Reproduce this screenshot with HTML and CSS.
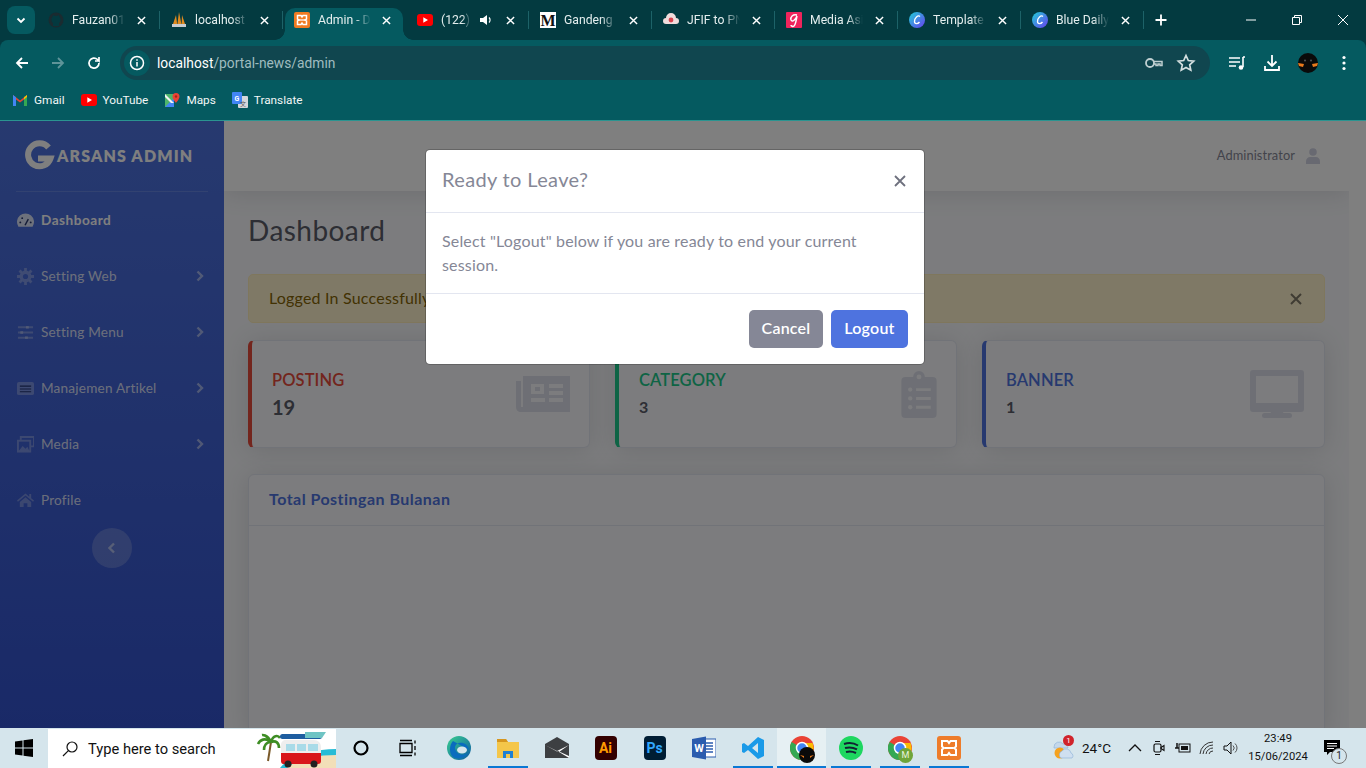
FILE: index.html
```html
<!DOCTYPE html>
<html lang="en">
<head>
<meta charset="utf-8">
<title>Admin - Dashboard</title>
<link rel="stylesheet" href="styles.css">
</head>
<body>
<svg class="defs" width="0" height="0" aria-hidden="true">
  <defs>
    <linearGradient id="canva" x1="0" y1="0" x2="1" y2="1"><stop offset="0" stop-color="#1fd0d6"/><stop offset="1" stop-color="#6a3df0"/></linearGradient>
    <linearGradient id="edge" x1="0" y1="0" x2="1" y2="1"><stop offset="0" stop-color="#3bd08f"/><stop offset="1" stop-color="#0c59a4"/></linearGradient>
  </defs>
</svg>

<header class="chrome">
  <div class="tabstrip">
    <button class="tab-search"><svg width="12" height="12" viewBox="0 0 12 12"><path d="M2.5 4.5 6 8l3.5-3.5" fill="none" stroke="#fff" stroke-width="1.8"/></svg></button>
    <div class="tab">
      <svg class="fav" viewBox="0 0 16 16"><circle cx="8" cy="8" r="7.5" fill="#1a2b30"/><path d="M5 14V11C3 10 3 6 4.5 5L5 3l2 1h2l2-1 .5 2C13 6 13 10 11 11v3" fill="#03393f"/></svg>
      <span class="tab-title">Fauzan010</span>
      <svg class="x" viewBox="0 0 10 10"><path d="M1 1l8 8M9 1 1 9"/></svg>
    </div>
    <div class="tab">
      <svg class="fav" viewBox="0 0 16 16"><path d="M1 15 5 3l1.500 12zM6 15 8 0l3 15zM10.500 15 11 3l4 12z" fill="#e08a1e"/><rect x="1" y="12" width="14" height="3" fill="#c9ccd0"/></svg>
      <span class="tab-title">localhost /</span>
      <svg class="x" viewBox="0 0 10 10"><path d="M1 1l8 8M9 1 1 9"/></svg>
    </div>
    <div class="tab tab-active">
      <svg class="fav" viewBox="0 0 16 16"><rect width="16" height="16" rx="2" fill="#f07b22"/><path d="M3.500 3.500h3.500l1 1.500 1-1.500h3.500v3.500l-1.500 1 1.500 1v3.500H9l-1-1.500-1 1.500H3.500V9L5 8 3.500 7z" fill="none" stroke="#fff" stroke-width="1.500"/><path d="M5 8h6" stroke="#fff" stroke-width="1.300"/></svg>
      <span class="tab-title">Admin - D</span>
      <svg class="x" viewBox="0 0 10 10"><path d="M1 1l8 8M9 1 1 9"/></svg>
    </div>
    <div class="tab">
      <svg class="fav" viewBox="0 0 16 16"><rect y="2" width="16" height="12" rx="3" fill="#f00"/><path d="M6.3 5.3v5.4L11 8z" fill="#fff"/></svg>
      <span class="tab-title tab-title-short">(122) T</span>
      <svg class="speaker" viewBox="0 0 14 14"><path d="M1 5h3l4-3v10L4 9H1z" fill="#fff"/><path d="M10 4.5a3.5 3.5 0 0 1 0 5" fill="none" stroke="#fff" stroke-width="1.2"/></svg>
      <svg class="x" viewBox="0 0 10 10"><path d="M1 1l8 8M9 1 1 9"/></svg>
    </div>
    <div class="tab">
      <svg class="fav" viewBox="0 0 16 16"><rect width="16" height="16" fill="#fff"/><text x="8" y="14" class="fav-m">M</text></svg>
      <span class="tab-title">Gandeng</span>
      <svg class="x" viewBox="0 0 10 10"><path d="M1 1l8 8M9 1 1 9"/></svg>
    </div>
    <div class="tab">
      <svg class="fav" viewBox="0 0 16 16"><path d="M3 12a3 3 0 0 1 0-6 5 5 0 0 1 10 0 3 3 0 0 1 0 6z" fill="#f1dcdc"/><circle cx="8" cy="8" r="2.4" fill="#d8434e"/></svg>
      <span class="tab-title">JFIF to PNG</span>
      <svg class="x" viewBox="0 0 10 10"><path d="M1 1l8 8M9 1 1 9"/></svg>
    </div>
    <div class="tab">
      <svg class="fav" viewBox="0 0 16 16"><rect width="16" height="16" rx="1" fill="#f0245c"/><path d="M11 3C7 2 4 5 5 8c1 2 4 1 6-4-1 4-1 8-3 10-1 1-3 0-3-1" fill="none" stroke="#fff" stroke-width="1.5"/></svg>
      <span class="tab-title">Media Asi</span>
      <svg class="x" viewBox="0 0 10 10"><path d="M1 1l8 8M9 1 1 9"/></svg>
    </div>
    <div class="tab">
      <svg class="fav" viewBox="0 0 16 16"><circle cx="8" cy="8" r="8" fill="url(#canva)"/><path d="M11 4.5C9 2.500 5.500 6 5.500 9.500c0 3 3.500 2.500 5 .5" fill="none" stroke="#fff" stroke-width="1.300"/></svg>
      <span class="tab-title">Template</span>
      <svg class="x" viewBox="0 0 10 10"><path d="M1 1l8 8M9 1 1 9"/></svg>
    </div>
    <div class="tab">
      <svg class="fav" viewBox="0 0 16 16"><circle cx="8" cy="8" r="8" fill="url(#canva)"/><path d="M11 4.500C9 2.500 5.500 6 5.500 9.500c0 3 3.500 2.500 5 .5" fill="none" stroke="#fff" stroke-width="1.300"/></svg>
      <span class="tab-title">Blue Daily</span>
      <svg class="x" viewBox="0 0 10 10"><path d="M1 1l8 8M9 1 1 9"/></svg>
    </div>
    <svg class="plus" viewBox="0 0 12 12"><path d="M6 .5v11M.5 6h11" stroke="#fff" stroke-width="1.800"/></svg>
    <div class="win-controls">
      <svg viewBox="0 0 10 10"><path d="M0 5h10" stroke="#fff"/></svg>
      <svg viewBox="0 0 10 10"><path d="M.5 2.500h7v7h-7zM2.500 2.500v-2h7v7h-2" fill="none" stroke="#fff"/></svg>
      <svg viewBox="0 0 10 10"><path d="M0 0l10 10M10 0 0 10" stroke="#fff"/></svg>
    </div>
  </div>

  <div class="toolbar">
    <svg class="nav-ic" viewBox="0 0 16 16"><path d="M14 8H3M8 3 3 8l5 5" fill="none" stroke="#fff" stroke-width="1.800"/></svg>
    <svg class="nav-ic nav-dim" viewBox="0 0 16 16"><path d="M2 8h11M8 3l5 5-5 5" fill="none" stroke="#5f9499" stroke-width="1.800"/></svg>
    <svg class="nav-ic" viewBox="0 0 16 16"><path d="M13 8a5 5 0 1 1-1.500-3.500L13 6V2M13 6H9" fill="none" stroke="#fff" stroke-width="1.700"/></svg>
    <div class="omnibox">
      <span class="site-info"><svg width="16" height="16" viewBox="0 0 16 16"><circle cx="8" cy="8" r="6.500" fill="none" stroke="#fff" stroke-width="1.500"/><path d="M8 7v4.500M8 4.300v1.500" stroke="#fff" stroke-width="1.500"/></svg></span>
      <span class="url"><b>localhost</b>/portal-news/admin</span>
      <svg class="omni-ic" viewBox="0 0 20 20"><circle cx="6" cy="10" r="4" fill="none" stroke="#bfcfd1" stroke-width="1.800"/><path d="M10 8.500h8v4h-2V11h-2v1.500h-2V11h-2" fill="none" stroke="#bfcfd1" stroke-width="1.500"/></svg>
      <svg class="omni-ic" viewBox="0 0 20 20"><path d="M10 2.500l2.300 5 5.400.6-4 3.700 1.100 5.400L10 14.500l-4.800 2.700 1.100-5.400-4-3.700 5.400-.6z" fill="none" stroke="#d4dfe0" stroke-width="1.700"/></svg>
    </div>
    <div class="tool-actions">
      <svg viewBox="0 0 18 18"><path d="M1 4h11M1 8h11M1 12h7" stroke="#fff" stroke-width="1.600"/><path d="M15 3h2M15 3v10" stroke="#fff" stroke-width="1.600" fill="none"/><circle cx="13" cy="13.500" r="2.300" fill="#fff"/></svg>
      <svg viewBox="0 0 18 18"><path d="M9 1v11M4.500 7.500 9 12l4.500-4.500M2 12v4h14v-4" fill="none" stroke="#fff" stroke-width="1.800"/></svg>
      <svg class="avatar" viewBox="0 0 20 20"><circle cx="10" cy="10" r="10" fill="#0a0a0a"/><path d="M0 10l6 1-1 3-4-1zM20 10l-6 1 1 3 4-1z" fill="#e8791c"/><circle cx="7" cy="7.500" r="1" fill="#555"/><circle cx="13" cy="7.500" r="1" fill="#555"/></svg>
      <svg viewBox="0 0 18 18"><circle cx="9" cy="3.500" r="1.600" fill="#fff"/><circle cx="9" cy="9" r="1.600" fill="#fff"/><circle cx="9" cy="14.500" r="1.600" fill="#fff"/></svg>
    </div>
  </div>

  <nav class="bookmarks">
    <a class="bm"><svg viewBox="0 0 16 16"><path d="M1 14V3l7 5.500L15 3v11h-3V7.500L8 10.500 4 7.500V14z" fill="#ea4335"/><path d="M1 14V3l3 2.300V14z" fill="#4285f4"/><path d="M15 14V3l-3 2.300V14z" fill="#34a853"/><path d="M12 5.300 15 3v2l-3 2.500z" fill="#fbbc04"/></svg>Gmail</a>
    <a class="bm"><svg viewBox="0 0 16 16"><rect y="2" width="16" height="12" rx="3" fill="#f00"/><path d="M6.300 5.300v5.400L11 8z" fill="#fff"/></svg>YouTube</a>
    <a class="bm"><svg viewBox="0 0 16 16"><path d="M1 2h9v13H1z" fill="#4fb56a"/><path d="M1 15 10 6v9z" fill="#4285f4"/><path d="M1 2l9 9H7L1 5z" fill="#f4f4f4"/><path d="M12 1a3.500 3.500 0 0 0-3.500 3.500C8.500 7 12 11 12 11s3.500-4 3.500-6.500A3.500 3.500 0 0 0 12 1z" fill="#ea4335"/><circle cx="12" cy="4.500" r="1.200" fill="#a52714"/></svg>Maps</a>
    <a class="bm"><svg viewBox="0 0 16 16"><rect x="6" y="4" width="10" height="12" rx="1" fill="#d5d7db"/><rect width="10" height="12" rx="1" fill="#4285f4"/><text x="5" y="9" class="bm-g">G</text><text x="11" y="14" class="bm-t">文</text></svg>Translate</a>
  </nav>
</header>

<div class="app">
  <aside class="sidebar">
    <div class="brand">
      <svg class="brand-g" viewBox="0 0 30 30"><path d="M23.500 7.500A11.500 11.500 0 1 0 25.500 18.500H13" fill="none" stroke="#fff" stroke-width="6"/></svg>
      <span class="brand-text">ARSANS ADMIN</span>
    </div>
    <div class="side-divider"></div>
    <a class="side-item side-active">
      <svg class="side-ic" viewBox="0 0 18 18"><path d="M1.500 15.500a9 9 0 1 1 15 0z" fill="currentColor"/><path d="M8.500 14 12 7.500" stroke="#27376f" stroke-width="1.500"/><circle cx="3.500" cy="11" r="1" fill="#27376f"/><circle cx="5.500" cy="6.500" r="1" fill="#27376f"/><circle cx="14.500" cy="11" r="1" fill="#27376f"/></svg>
      <span>Dashboard</span>
    </a>
    <a class="side-item">
      <svg class="side-ic" viewBox="0 0 18 18"><circle cx="9" cy="9" r="4.500" fill="none" stroke="currentColor" stroke-width="3.500"/><path d="M9 0v3M9 15v3M0 9h3M15 9h3M2.700 2.700l2 2M13.300 13.300l2 2M15.300 2.700l-2 2M4.700 13.300l-2 2" stroke="currentColor" stroke-width="3"/></svg>
      <span>Setting Web</span>
      <svg class="chev" viewBox="0 0 8 12"><path d="M1.500 1.500 6 6l-4.500 4.500" fill="none" stroke="currentColor" stroke-width="2.400"/></svg>
    </a>
    <a class="side-item">
      <svg class="side-ic" viewBox="0 0 18 18"><path d="M1 3.500h16M1 9h16M1 14.500h16" stroke="currentColor" stroke-width="2"/><path d="M11 2v3M5 7.500v3M10 13v3" stroke="currentColor" stroke-width="3"/></svg>
      <span>Setting Menu</span>
      <svg class="chev" viewBox="0 0 8 12"><path d="M1.500 1.500 6 6l-4.500 4.500" fill="none" stroke="currentColor" stroke-width="2.400"/></svg>
    </a>
    <a class="side-item">
      <svg class="side-ic" viewBox="0 0 18 18"><rect y="2" width="18" height="14" rx="2" fill="currentColor"/><path d="M3 6.500h12M3 9.500h12M3 12.500h12" stroke="#223572" stroke-width="1.200"/></svg>
      <span>Manajemen Artikel</span>
      <svg class="chev" viewBox="0 0 8 12"><path d="M1.500 1.500 6 6l-4.500 4.500" fill="none" stroke="currentColor" stroke-width="2.400"/></svg>
    </a>
    <a class="side-item">
      <svg class="side-ic" viewBox="0 0 18 18"><path d="M4 4V1h14v10h-3" fill="none" stroke="currentColor" stroke-width="2"/><rect x="1" y="5" width="13" height="11.500" fill="none" stroke="currentColor" stroke-width="2"/><path d="M2 15.500l4-5 3 3 2-2 2 4z" fill="currentColor"/></svg>
      <span>Media</span>
      <svg class="chev" viewBox="0 0 8 12"><path d="M1.500 1.500 6 6l-4.500 4.500" fill="none" stroke="currentColor" stroke-width="2.400"/></svg>
    </a>
    <a class="side-item">
      <svg class="side-ic" viewBox="0 0 18 18"><path d="M9 1.500 0 9l1 1.200L9 3.700l8 6.500L18 9l-3-2.500V2h-2v3zM3 10.500V16h4v-4h4v4h4v-5.500L9 5.500z" fill="currentColor"/></svg>
      <span>Profile</span>
    </a>
    <button class="side-toggle"><svg width="8" height="12" viewBox="0 0 8 12"><path d="M6 1.500 1.500 6 6 10.500" fill="none" stroke="currentColor" stroke-width="2.400"/></svg></button>
  </aside>

  <div class="main-wrap">
    <main class="main">
      <div class="topbar">
        <span class="user-name">Administrator</span>
        <svg class="user-ic" viewBox="0 0 14 16"><circle cx="7" cy="4" r="3.800" fill="#d1d3e2"/><path d="M0 16v-2.500C0 10.500 2 9 4 9h6c2 0 4 1.500 4 4.500V16z" fill="#d1d3e2"/></svg>
      </div>
      <div class="content">
        <h1 class="page-title">Dashboard</h1>
        <div class="alert">
          <span>Logged In Successfully</span>
          <svg class="alert-x" viewBox="0 0 12 12"><path d="M1 1l10 10M11 1 1 11" stroke="#000" stroke-opacity=".5" stroke-width="2"/></svg>
        </div>
        <div class="stat-row">
          <div class="stat stat-red">
            <div class="stat-body"><div class="stat-label">POSTING</div><div class="stat-value">19</div></div>
            <svg class="stat-ic stat-ic-news" viewBox="0 0 54 36"><path d="M7 0h47v36H5C2 36 0 34 0 31V5h5v26h2z" fill="#dddfeb"/><path d="M15 8v10h13V8zM19 11h5v4h-5z" fill="#f8f9fc" fill-rule="evenodd"/><path d="M33 8h14v4H33zM33 15h14v4H33zM15 22h14v4H15zM33 22h14v4H33z" fill="#f8f9fc"/></svg>
          </div>
          <div class="stat stat-green">
            <div class="stat-body"><div class="stat-label">CATEGORY</div><div class="stat-value stat-value-sm">3</div></div>
            <svg class="stat-ic stat-ic-clip" viewBox="0 0 36 48"><path d="M4 6h8a6 6 0 0 1 12 0h8a4 4 0 0 1 4 4v34a4 4 0 0 1-4 4H4a4 4 0 0 1-4-4V10a4 4 0 0 1 4-4z" fill="#dddfeb"/><circle cx="18" cy="6" r="2.500" fill="#f8f9fc"/><circle cx="9" cy="19" r="2.200" fill="#f8f9fc"/><circle cx="9" cy="28" r="2.200" fill="#f8f9fc"/><circle cx="9" cy="37" r="2.200" fill="#f8f9fc"/><path d="M15 17.500h15v3H15zM15 26.500h15v3H15zM15 35.500h15v3H15z" fill="#f8f9fc"/></svg>
          </div>
          <div class="stat stat-blue">
            <div class="stat-body"><div class="stat-label">BANNER</div><div class="stat-value stat-value-sm">1</div></div>
            <svg class="stat-ic stat-ic-desk" viewBox="0 0 54 48"><path d="M3 0h48a3 3 0 0 1 3 3v36H0V3a3 3 0 0 1 3-3zM6 6v27h42V6z" fill="#dddfeb" fill-rule="evenodd"/><path d="M0 36h54v3a3 3 0 0 1-3 3H3a3 3 0 0 1-3-3zM21 42h12l1 2H20z" fill="#dddfeb"/><rect x="12" y="43" width="30" height="5" rx="2.500" fill="#dddfeb"/></svg>
          </div>
        </div>
        <section class="panel">
          <div class="panel-head">Total Postingan Bulanan</div>
        </section>
      </div>
    </main>
    <div class="scroll-gutter"></div>
  </div>

  <div class="backdrop">
    <div class="modal">
      <div class="modal-head">
        <h2 class="modal-title">Ready to Leave?</h2>
        <svg class="modal-x" viewBox="0 0 12 12"><path d="M1 1l10 10M11 1 1 11" stroke="#6e707e" stroke-width="1.800"/></svg>
      </div>
      <div class="modal-body">Select "Logout" below if you are ready to end your current session.</div>
      <div class="modal-foot">
        <button class="btn btn-grey">Cancel</button>
        <button class="btn btn-blue">Logout</button>
      </div>
    </div>
  </div>
</div>

<footer class="taskbar">
  <div class="start"><svg width="18" height="18" viewBox="0 0 18 18"><path d="M0 2.500 7.500 1.400V8.500H0zM8.500 1.300 18 0v8.500H8.500zM0 9.500h7.500v7.100L0 15.500zM8.500 9.500H18V18L8.500 16.700z" fill="#000"/></svg></div>
  <div class="search">
    <svg class="search-ic" viewBox="0 0 16 16"><circle cx="10" cy="6" r="5" fill="none" stroke="#111" stroke-width="1.200"/><path d="M6.400 9.600 1 15" stroke="#111" stroke-width="1.200"/></svg>
    <span>Type here to search</span>
    <svg class="search-art" viewBox="0 0 81 39">
      <path d="M30 39C40 28 60 24 81 24v15z" fill="#f2dfb8"/><path d="M25 39C35 26 60 20 81 20v6C60 26 42 30 32 39z" fill="#27bcd6"/>
      <path d="M13 32 16 13" stroke="#7a5a2a" stroke-width="2"/>
      <path d="M16 13C10 8 5 11 3 15M16 13C12 5 7 6 7 6M16 13C18 6 23 6 25 9M16 13C21 11 24 14 24 19M16 13C11 13 9 17 9 21" fill="none" stroke="#3e8d24" stroke-width="2.600"/>
      <rect x="25" y="5" width="42" height="5" rx="2.500" fill="#1e5da0"/><path d="M50 3h21l-4 6H50z" fill="#6fc4c4"/>
      <path d="M26 16c0-3 2-5 5-5h28c4 0 7 3 7 7v8H26z" fill="#eee"/>
      <path d="M26 24h40v8c0 2-1 3-3 3H28c-1 0-2-1-2-3z" fill="#d9161b"/>
      <rect x="31" y="15" width="9" height="7" fill="#a9dbe8"/><rect x="42" y="15" width="9" height="7" fill="#a9dbe8"/><rect x="53" y="15" width="10" height="7" fill="#a9dbe8"/>
      <circle cx="33" cy="35" r="3.500" fill="#222"/><circle cx="59" cy="35" r="3.500" fill="#222"/>
    </svg>
  </div>
  <div class="task-icons">
    <div class="task"><svg viewBox="0 0 20 20"><circle cx="10" cy="10" r="6.500" fill="none" stroke="#000" stroke-width="2.200"/></svg></div>
    <div class="task task-nudge"><svg viewBox="0 0 20 20"><path d="M2 5.500h12v9H2z" fill="none" stroke="#000" stroke-width="1.300"/><path d="M2 2.500h12M2 17.500h12M17 2.500v3M17 8v4M17 14.500v3" stroke="#000" stroke-width="1.300"/></svg></div>
    <div class="task"><svg class="big" viewBox="0 0 24 24"><circle cx="12" cy="12" r="12" fill="url(#edge)"/><path d="M22 14c-1-6-6-8-10-7-4 1-5 5-3 8 2 4 7 5 12 2-3 5-10 7-15 4C2 18 2 9 6 5" fill="#0a6cbe"/><ellipse cx="15" cy="14" rx="5" ry="3.500" fill="#d5e5ec"/></svg></div>
    <div class="task task-on"><svg class="big" viewBox="0 0 24 24"><path d="M1 3h9l2 3h11v16H1z" fill="#f4c64a"/><path d="M1 3h9l2 3H1z" fill="#d6961f"/><rect x="7" y="15" width="10" height="7" fill="#1f80d2"/><rect x="10" y="18" width="4" height="4" fill="#f4c64a"/></svg></div>
    <div class="task"><svg class="big" viewBox="0 0 24 24"><path d="M0 8 12 1l12 7v14H0z" fill="#3d3f42"/><path d="M0 9l12 6 12-6-10 7 10 6v-2L13 15l-1 .5L0 9z" fill="#fff"/></svg></div>
    <div class="task"><div class="app-tile tile-ai">Ai</div></div>
    <div class="task"><div class="app-tile tile-ps">Ps</div></div>
    <div class="task"><svg class="big" viewBox="0 0 24 24"><rect x="9" y="3" width="15" height="18" fill="#fff" stroke="#2b5cae"/><path d="M13 7h8M13 10h8M13 13h8M13 16h8" stroke="#2b5cae" stroke-width="1.500"/><path d="M0 3l14-2.500v23L0 21z" fill="#2b5cae"/><text x="7" y="16" class="word-w">W</text></svg></div>
    <div class="task task-on"><svg class="big" viewBox="0 0 24 24"><path d="M17 1l6 3v16l-6 3-10-9-4 3-2-1V8l2-1 4 3zM17 7l-6 5 6 5z" fill="#1a9ae8" fill-rule="evenodd"/></svg></div>
    <div class="task task-on task-active"><svg class="big" viewBox="0 0 24 24"><circle cx="12" cy="12" r="12" fill="#ea4335"/><path d="M12 12 1.600 6A12 12 0 0 0 12 24l6-10z" fill="#34a853"/><path d="M12 7h10.500A12 12 0 0 1 12 24l6-10z" fill="#fbbc04"/><circle cx="12" cy="12" r="5.500" fill="#4285f4" stroke="#fff" stroke-width="1.500"/></svg><svg class="task-badge" viewBox="0 0 16 16"><circle cx="8" cy="8" r="8" fill="#0a0a0a"/><path d="M1 8l4 1v2zM15 8l-4 1v2z" fill="#e8791c"/></svg></div>
    <div class="task task-on"><svg class="big" viewBox="0 0 24 24"><circle cx="12" cy="12" r="12" fill="#1ed760"/><path d="M5 8c5-1.500 10-1 14 1.500M6 12c4-1 8-.7 12 1.300M7 16c3-.8 7-.5 10 1" fill="none" stroke="#123" stroke-width="2"/></svg></div>
    <div class="task task-on"><svg class="big" viewBox="0 0 24 24"><circle cx="12" cy="12" r="12" fill="#ea4335"/><path d="M12 12 1.600 6A12 12 0 0 0 12 24l6-10z" fill="#34a853"/><path d="M12 7h10.500A12 12 0 0 1 12 24l6-10z" fill="#fbbc04"/><circle cx="12" cy="12" r="5.500" fill="#4285f4" stroke="#fff" stroke-width="1.500"/></svg><span class="task-m">M</span></div>
    <div class="task task-on"><svg class="big" viewBox="0 0 24 24"><rect width="24" height="24" rx="3" fill="#ee7c2a"/><path d="M5 5h5.500L12 7l1.500-2H19v5.500L17 12l2 1.500V19h-5.500L12 17l-1.500 2H5v-5.500L7 12l-2-1.500z" fill="none" stroke="#fff" stroke-width="2"/><path d="M7.500 12h9" stroke="#fff" stroke-width="2"/></svg></div>
  </div>
  <div class="tray">
    <svg class="tray-weather" viewBox="0 0 24 24"><path d="M3 11a5 5 0 0 1 9-3 4 4 0 0 1 5 4H3z" fill="#c5d8ea" stroke="#8ab0d6" stroke-width=".6"/><circle cx="9" cy="17" r="5.500" fill="#f5a21f"/><path d="M10 22a4 4 0 0 1 1-7 5 5 0 0 1 9 2 3 3 0 0 1 1 5z" fill="#cfdff0" stroke="#8ab0d6" stroke-width=".6"/></svg>
    <span class="tray-badge">1</span>
    <span class="tray-temp">24°C</span>
    <svg class="tray-ic tray-first" viewBox="0 0 16 16"><path d="M2 11l6-6 6 6" fill="none" stroke="#111" stroke-width="1.300"/></svg>
    <svg class="tray-ic" viewBox="0 0 16 16"><rect x="3" y="4" width="7" height="8" rx="1.500" fill="none" stroke="#111" stroke-width="1.200"/><path d="M10 7.500l3-2v5l-3-2zM4 1.500h5M4 14.500h5" fill="none" stroke="#111" stroke-width="1.100"/></svg>
    <svg class="tray-ic" viewBox="0 0 16 16"><rect x="4" y="4" width="11" height="8" fill="none" stroke="#111"/><rect x="6" y="6" width="7" height="4" fill="#111"/><path d="M0 8h4M2 3v5" stroke="#111" stroke-width="1.500"/></svg>
    <svg class="tray-ic" viewBox="0 0 16 16"><path d="M1 14a13 13 0 0 1 13-12M4 14a10 10 0 0 1 10-9M7 14a7 7 0 0 1 7-6M10 14a4 4 0 0 1 4-3" fill="none" stroke="#333" stroke-width="1"/></svg>
    <svg class="tray-ic" viewBox="0 0 16 16"><path d="M1 6h3l4-4v12l-4-4H1z" fill="none" stroke="#111"/><path d="M10 5.500a3.500 3.500 0 0 1 0 5M12 3.500a6 6 0 0 1 0 9" fill="none" stroke="#444" stroke-width=".9"/></svg>
    <div class="clock"><span>23:49</span><span>15/06/2024</span></div>
    <div class="notif">
      <svg width="16" height="16" viewBox="0 0 16 16"><path d="M0 0h16v12H6l-3 3v-3H0z" fill="#000"/><path d="M3 3.500h10M3 6h10M3 8.500h7" stroke="#fff"/></svg>
      <span class="notif-count">1</span>
    </div>
  </div>
</footer>
</body>
</html>
```

FILE: styles.css
```css
* { box-sizing: border-box; }
html, body { margin: 0; height: 100%; overflow: hidden; }
body {
  width: 1366px; height: 768px; display: flex; flex-direction: column;
  font-family: "Lato", "Noto Sans", sans-serif; background: #fff;
}
.defs { position: absolute; }
button { border: 0; font-family: inherit; padding: 0; }

/* browser chrome */
.chrome { flex: 0 0 121px; background: #033a40; color: #fff; font-family: "Roboto", "Noto Sans", sans-serif; border-bottom: 1px solid #2a9490; }
.tabstrip { height: 40px; display: flex; align-items: flex-start; padding-left: 7px; }
.tab-search { width: 28px; height: 28px; margin: 6px 2px 0 0; border-radius: 8px; background: #055a60; display: flex; align-items: center; justify-content: center; }
.tab { width: 123px; height: 32px; margin-top: 8px; display: flex; align-items: center; padding: 0 11px 8px; position: relative; font-size: 12.2px; color: #e4eeee; }
.tab::after { content: ""; position: absolute; right: 0; top: 3px; height: 18px; width: 1px; background: #1d6268; }
.tab-active { background: #055a60; border-radius: 10px 10px 0 0; margin-left: 2px; margin-right: 3px; width: 118px; padding: 0 9px 8px; }
.tab-active::before, .tab-active::after { content: ""; position: absolute; top: auto; bottom: 0; width: 10px; height: 10px; background: radial-gradient(circle at 0 0, transparent 9.500px, #055a60 10px); }
.tab-active::before { left: -10px; right: auto; }
.tab-active::after { right: -10px; background: radial-gradient(circle at 100% 0, transparent 9.500px, #055a60 10px); }
.fav { width: 16px; height: 16px; flex: none; }
.fav-m { font: 700 16px "Liberation Serif", serif; fill: #111; text-anchor: middle; }
.tab-title { width: 53px; margin-left: 8px; overflow: hidden; white-space: nowrap; -webkit-mask-image: linear-gradient(90deg, #000 70%, transparent 100%); mask-image: linear-gradient(90deg, #000 70%, transparent 100%); }
.tab-title-short { width: 30px; }
.speaker { width: 14px; height: 14px; margin-left: 8px; flex: none; }
.x { width: 9px; height: 9px; margin-left: auto; margin-right: 3px; flex: none; fill: none; stroke: #fff; stroke-width: 1.6; }
.plus { width: 12px; height: 12px; margin: 14px 0 0 11px; flex: none; }
.win-controls { margin-left: auto; display: flex; gap: 36px; padding: 15px 18px 0 0; }
.win-controls svg { width: 10px; height: 10px; }

.toolbar { height: 44px; background: #055a60; border-radius: 8px 8px 0 0; display: flex; align-items: center; padding: 2px 0 0 14px; gap: 20px; }
.nav-ic { width: 16px; height: 16px; flex: none; }
.omnibox { width: 1090px; height: 34px; margin-left: -2px; border-radius: 17px; background: #10464f; display: flex; align-items: center; padding: 0 14px 0 4px; flex: none; }
.site-info { width: 26px; height: 26px; border-radius: 50%; background: #055a60; display: flex; align-items: center; justify-content: center; }
.url { margin-left: 7px; font-size: 13.8px; color: #9fbcbf; flex: 1; }
.url b { font-weight: 400; color: #fff; }
.omni-ic { width: 20px; height: 20px; margin-left: 12px; flex: none; }
.tool-actions { display: flex; align-items: center; margin-left: -2px; }
.tool-actions svg { width: 18px; height: 18px; margin-right: 17px; }
.tool-actions .avatar { width: 20px; height: 20px; }

.bookmarks { height: 36px; background: #055a60; display: flex; align-items: center; padding: 0 0 5px 12px; font-size: 11.8px; gap: 16px; }
.bm { display: flex; align-items: center; gap: 6px; color: #f2f6f6; }
.bm svg { width: 16px; height: 16px; flex: none; }
.bm-g { font: 700 7px "Roboto", sans-serif; fill: #fff; text-anchor: middle; }
.bm-t { font: 6px "Noto Sans CJK SC", sans-serif; fill: #555; text-anchor: middle; }

/* app */
.app { flex: 1; min-height: 0; display: flex; position: relative; overflow: hidden; background: #fff; }
.sidebar { width: 224px; flex: none; background: linear-gradient(180deg, #4e73df 0%, #3353cf 100%); display: flex; flex-direction: column; align-items: center; }
.brand { width: 100%; height: 70px; display: flex; align-items: center; padding: 0 0 2px 25px; }
.brand-g { width: 30px; height: 30px; flex: none; }
.brand-text { margin-left: 2px; font-size: 16px; font-weight: 800; letter-spacing: 1.15px; color: #fff; white-space: nowrap; }
.side-divider { width: 192px; height: 1px; background: rgba(255,255,255,.15); flex: none; }
.side-item { width: 100%; height: 56px; flex: none; display: flex; align-items: center; padding: 0 20px 0 17px; font-size: 13.6px; color: rgba(255,255,255,.8); }
.side-item span { margin-left: 7px; letter-spacing: .2px; }
.side-ic { width: 17px; height: 17px; flex: none; color: rgba(255,255,255,.3); }
.side-active { color: #fff; font-weight: 700; }
.side-active span { letter-spacing: .5px; }
.side-active .side-ic { color: rgba(255,255,255,.8); }
.chev { width: 8px; height: 12px; margin-left: auto; color: rgba(255,255,255,.5); }
.side-toggle { width: 40px; height: 40px; border-radius: 50%; background: rgba(255,255,255,.2); color: rgba(255,255,255,.5); display: flex; align-items: center; justify-content: center; }

.main-wrap { flex: 1; display: flex; min-width: 0; }
.main { width: 1125px; flex: none; background: #f8f9fc; overflow: hidden; }
.scroll-gutter { flex: 1; background: #fff; }
.topbar { height: 70px; background: #fff; display: flex; align-items: center; justify-content: flex-end; padding: 0 29px 2px 0; box-shadow: 0 2px 24px rgba(58,59,69,.15); position: relative; }
.user-name { font-size: 12.8px; color: #858796; letter-spacing: .1px; }
.user-ic { width: 14px; height: 16px; margin-left: 11px; position: relative; top: 1px; }
.content { padding: 0 24px; }
.page-title { margin: 0; padding-top: 22px; height: 83px; font-size: 28px; line-height: 34px; font-weight: 400; color: #5a5c69; letter-spacing: .45px; }
.alert { height: 49px; background: #fff3cd; border: 1px solid #ffeeba; border-radius: 5px; color: #856404; font-size: 16px; padding: 0 22px 3px 20px; display: flex; align-items: center; justify-content: space-between; letter-spacing: .2px; }
.alert-x { width: 12px; height: 12px; position: relative; top: 2px; }
.stat-row { margin-top: 17px; display: grid; grid-template-columns: 342px 342px 343px; column-gap: 25px; }
.stat { height: 108px; background: #f8f9fc; border: 1px solid #e3e6f0; border-left-width: 4px; border-radius: 6px; display: flex; justify-content: space-between; align-items: center; padding: 0 19px 0 20px; box-shadow: 0 2px 24px rgba(58,59,69,.15); }
.stat-blue { padding-right: 20px; }
.stat-red { border-left-color: #e74a3b; }
.stat-green { border-left-color: #1cc88a; }
.stat-blue { border-left-color: #4e73df; }
.stat-label { font-size: 16.5px; font-weight: 600; line-height: 24px; letter-spacing: .1px; position: relative; top: 1px; }
.stat-red .stat-label { color: #e74a3b; }
.stat-green .stat-label { color: #1cc88a; }
.stat-blue .stat-label { color: #4e73df; }
.stat-value { font-size: 20px; font-weight: 700; color: #5a5c69; line-height: 30px; margin-top: 1px; }
.stat-value-sm { font-size: 16px; }
.stat-ic { flex: none; }
.stat-ic-news { width: 54px; height: 36px; }
.stat-ic-clip { width: 36px; height: 47px; }
.stat-ic-desk { width: 54px; height: 48px; }
.panel { margin-top: 26px; height: 260px; background: #f8f9fc; border: 1px solid #e3e6f0; border-radius: 6px; box-shadow: 0 2px 24px rgba(58,59,69,.15); }
.panel-head { height: 51px; border-bottom: 1px solid #e3e6f0; display: flex; align-items: center; padding: 0 20px 3px; font-size: 16px; font-weight: 700; color: #4e73df; letter-spacing: .47px; }

/* modal */
.backdrop { position: absolute; inset: 0; background: rgba(0,0,0,.5); display: flex; justify-content: center; align-items: flex-start; padding: 28px 16px 0 0; }
.modal { width: 500px; background: #fff; border: 1px solid rgba(0,0,0,.2); background-clip: padding-box; border-radius: 5px; color: #858796; }
.modal-head { height: 63px; border-bottom: 1px solid #e3e6f0; display: flex; align-items: center; justify-content: space-between; padding: 0 18px 4px 16px; }
.modal-title { margin: 0; font-size: 20px; font-weight: 400; letter-spacing: .35px; line-height: 30px; }
.modal-x { width: 12px; height: 12px; margin-top: 3px; }
.modal-body { height: 81px; padding: 16px; font-size: 16px; line-height: 24px; border-bottom: 1px solid #e3e6f0; letter-spacing: .17px; }
.modal-foot { height: 70px; display: flex; align-items: center; justify-content: flex-end; gap: 8px; padding: 0 16px; }
.btn { height: 38px; border-radius: 5px; color: #fff; font-size: 16px; font-weight: 600; letter-spacing: .2px; padding-bottom: 3px; }
.btn-grey { width: 74px; background: #858796; }
.btn-blue { width: 77px; background: #4e73df; }

/* taskbar */
.taskbar { flex: 0 0 40px; background: #d5e5ec; display: flex; color: #111; font-family: "Roboto", "Noto Sans", sans-serif; }
.start { width: 48px; display: flex; align-items: center; justify-content: center; }
.search { width: 288px; margin-top: 1px; background: #fff; display: flex; align-items: center; padding-left: 14px; font-size: 14.7px; position: relative; overflow: hidden; }
.search-ic { width: 16px; height: 16px; margin-right: 10px; }
.search-art { position: absolute; right: 0; bottom: 0; width: 81px; height: 39px; }
.task-icons { display: flex; }
.task { width: 49px; height: 40px; display: flex; align-items: center; justify-content: center; position: relative; }
.task-nudge { padding-right: 3px; }
.task svg { width: 20px; height: 20px; }
.task svg.big { width: 24px; height: 24px; }
.task-on::after { content: ""; position: absolute; left: 5px; right: 4px; bottom: 0; height: 2px; background: #0a78d4; }
.task-active { background: #e6f0f3; }
.task-active::after { left: 0; right: 0; }
.task svg.task-badge { position: absolute; width: 16px; height: 16px; right: 11px; bottom: 5px; }
.task-m { position: absolute; width: 15px; height: 15px; border-radius: 50%; right: 11px; bottom: 5px; background: #6fa53a; color: #e9f3de; font-size: 9px; line-height: 15px; text-align: center; }
.app-tile { width: 22px; height: 24px; border-radius: 4px; font-weight: 700; font-size: 14px; text-align: center; line-height: 24px; }
.tile-ai { background: #300; color: #ff9a00; }
.tile-ps { background: #001d34; color: #31a8ff; }
.word-w { font: 700 11px "Roboto", sans-serif; fill: #fff; text-anchor: middle; }
.tray { margin-left: auto; display: flex; align-items: center; position: relative; }
.tray-weather { width: 24px; height: 24px; }
.tray-badge { position: absolute; left: 12px; top: 7px; width: 11px; height: 11px; border-radius: 50%; background: #d0232b; color: #fff; font-size: 8px; line-height: 11px; text-align: center; }
.tray-temp { font-size: 13.5px; margin-left: 7px; }
.tray-ic { width: 16px; height: 16px; margin-left: 8px; }
.tray-first { margin-left: 16px; }
.clock { width: 76px; margin-left: 1px; display: flex; flex-direction: column; align-items: center; font-size: 11.2px; line-height: 18px; }
.notif { width: 50px; height: 40px; padding-left: 8px; display: flex; align-items: center; position: relative; }
.notif-count { position: absolute; left: 15px; top: 20px; width: 16px; height: 16px; border-radius: 50%; background: #d5e5ec; border: 1.500px solid #777; color: #222; font-size: 10px; line-height: 13px; text-align: center; }
```
